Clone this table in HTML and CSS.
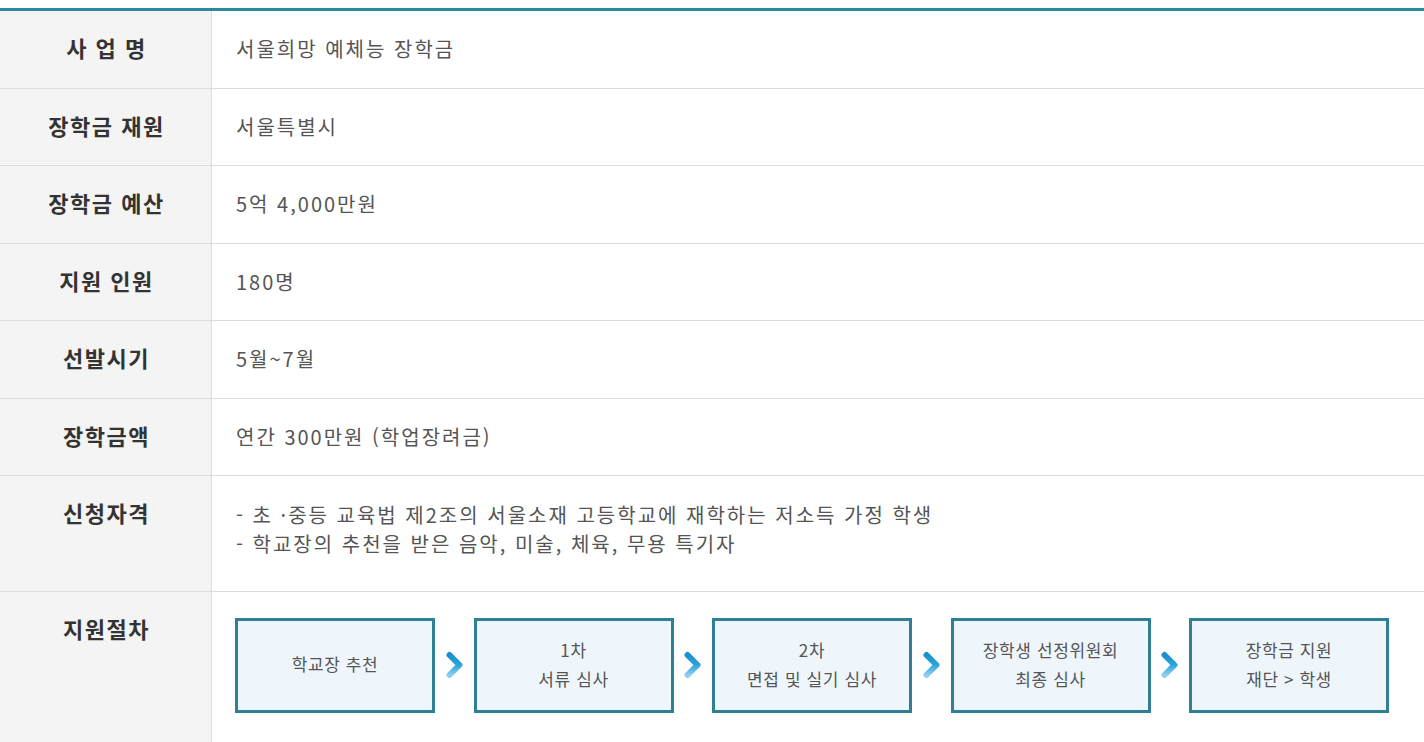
FILE: index.html
```html
<!DOCTYPE html>
<html lang="ko">
<head>
<meta charset="utf-8">
<link rel="stylesheet" href="styles.css">
</head>
<body>
<svg class="defs" width="0" height="0" aria-hidden="true">
  <defs>
    <linearGradient id="g" x1="0" y1="0" x2="0" y2="1">
      <stop offset="0" stop-color="#1b90cc"/>
      <stop offset="0.5" stop-color="#2da3dc"/>
      <stop offset="1" stop-color="#8fd0f0"/>
    </linearGradient>
  </defs>
</svg>
<div class="info">
  <div class="row">
    <div class="th">사 업 명</div>
    <div class="td">서울희망 예체능 장학금</div>
  </div>
  <div class="row">
    <div class="th">장학금 재원</div>
    <div class="td">서울특별시</div>
  </div>
  <div class="row">
    <div class="th">장학금 예산</div>
    <div class="td">5억 4,000만원</div>
  </div>
  <div class="row">
    <div class="th">지원 인원</div>
    <div class="td">180명</div>
  </div>
  <div class="row">
    <div class="th">선발시기</div>
    <div class="td">5월~7월</div>
  </div>
  <div class="row">
    <div class="th">장학금액</div>
    <div class="td">연간 300만원 (학업장려금)</div>
  </div>
  <div class="row">
    <div class="th">신청자격</div>
    <div class="td list">
      <p>- 초 ·중등 교육법 제2조의 서울소재 고등학교에 재학하는 저소득 가정 학생</p>
      <p>- 학교장의 추천을 받은 음악, 미술, 체육, 무용 특기자</p>
    </div>
  </div>
  <div class="row">
    <div class="th">지원절차</div>
    <div class="td flow">
      <div class="step">학교장 추천</div>
      <div class="arrow"><svg width="20" height="28" viewBox="0 0 20 28"><path d="M4.5 4 L14.5 14 L4.5 24" fill="none" stroke="url(#g)" stroke-width="6" stroke-linecap="round" stroke-linejoin="round"/></svg></div>
      <div class="step">1차<br>서류 심사</div>
      <div class="arrow"><svg width="20" height="28" viewBox="0 0 20 28"><path d="M4.5 4 L14.5 14 L4.5 24" fill="none" stroke="url(#g)" stroke-width="6" stroke-linecap="round" stroke-linejoin="round"/></svg></div>
      <div class="step">2차<br>면접 및 실기 심사</div>
      <div class="arrow"><svg width="20" height="28" viewBox="0 0 20 28"><path d="M4.5 4 L14.5 14 L4.5 24" fill="none" stroke="url(#g)" stroke-width="6" stroke-linecap="round" stroke-linejoin="round"/></svg></div>
      <div class="step">장학생 선정위원회<br>최종 심사</div>
      <div class="arrow"><svg width="20" height="28" viewBox="0 0 20 28"><path d="M4.5 4 L14.5 14 L4.5 24" fill="none" stroke="url(#g)" stroke-width="6" stroke-linecap="round" stroke-linejoin="round"/></svg></div>
      <div class="step">장학금 지원<br>재단 &gt; 학생</div>
    </div>
  </div>
</div>
</body>
</html>
```

FILE: styles.css
```css
html, body {
  margin: 0;
  padding: 0;
  background: #fff;
}
body {
  padding-top: 8px;
  font-family: "Noto Sans CJK KR", "Noto Sans", sans-serif;
}
.defs {
  position: absolute;
  width: 0;
  height: 0;
}
.info {
  border-top: 3px solid #2b8a9e;
}
.row {
  display: flex;
  border-bottom: 1px solid #dcdcdc;
}
.th {
  flex: 0 0 212px;
  background: #f4f4f4;
  border-right: 1px solid #dcdcdc;
  text-align: center;
  font-weight: bold;
  font-size: 22px;
  letter-spacing: 1.5px;
  color: #333;
  line-height: 28.5px;
  padding: 22px 0 26px 2px;
  box-sizing: border-box;
}
.td {
  flex: 1;
  padding: 24px 0 24px 24px;
  font-size: 20px;
  letter-spacing: 2px;
  line-height: 28px;
  color: #555;
}
.list {
  padding-bottom: 33px;
}
.list p {
  margin: 0;
  line-height: 29px;
}
.flow {
  display: flex;
  align-items: center;
  padding: 26px 0 29px 23px;
  letter-spacing: 0;
}
.step {
  box-sizing: border-box;
  width: 200px;
  height: 95px;
  border: 3px solid #2f7f95;
  background: #eef6fc;
  display: flex;
  align-items: center;
  justify-content: center;
  text-align: center;
  font-size: 17px;
  letter-spacing: 0.6px;
  line-height: 29px;
  color: #555;
  padding-bottom: 4px;
}
.arrow {
  width: 38.5px;
  display: flex;
  justify-content: center;
  padding-left: 1px;
  padding-bottom: 2px;
  box-sizing: border-box;
}
.arrow svg {
  display: block;
}
```
